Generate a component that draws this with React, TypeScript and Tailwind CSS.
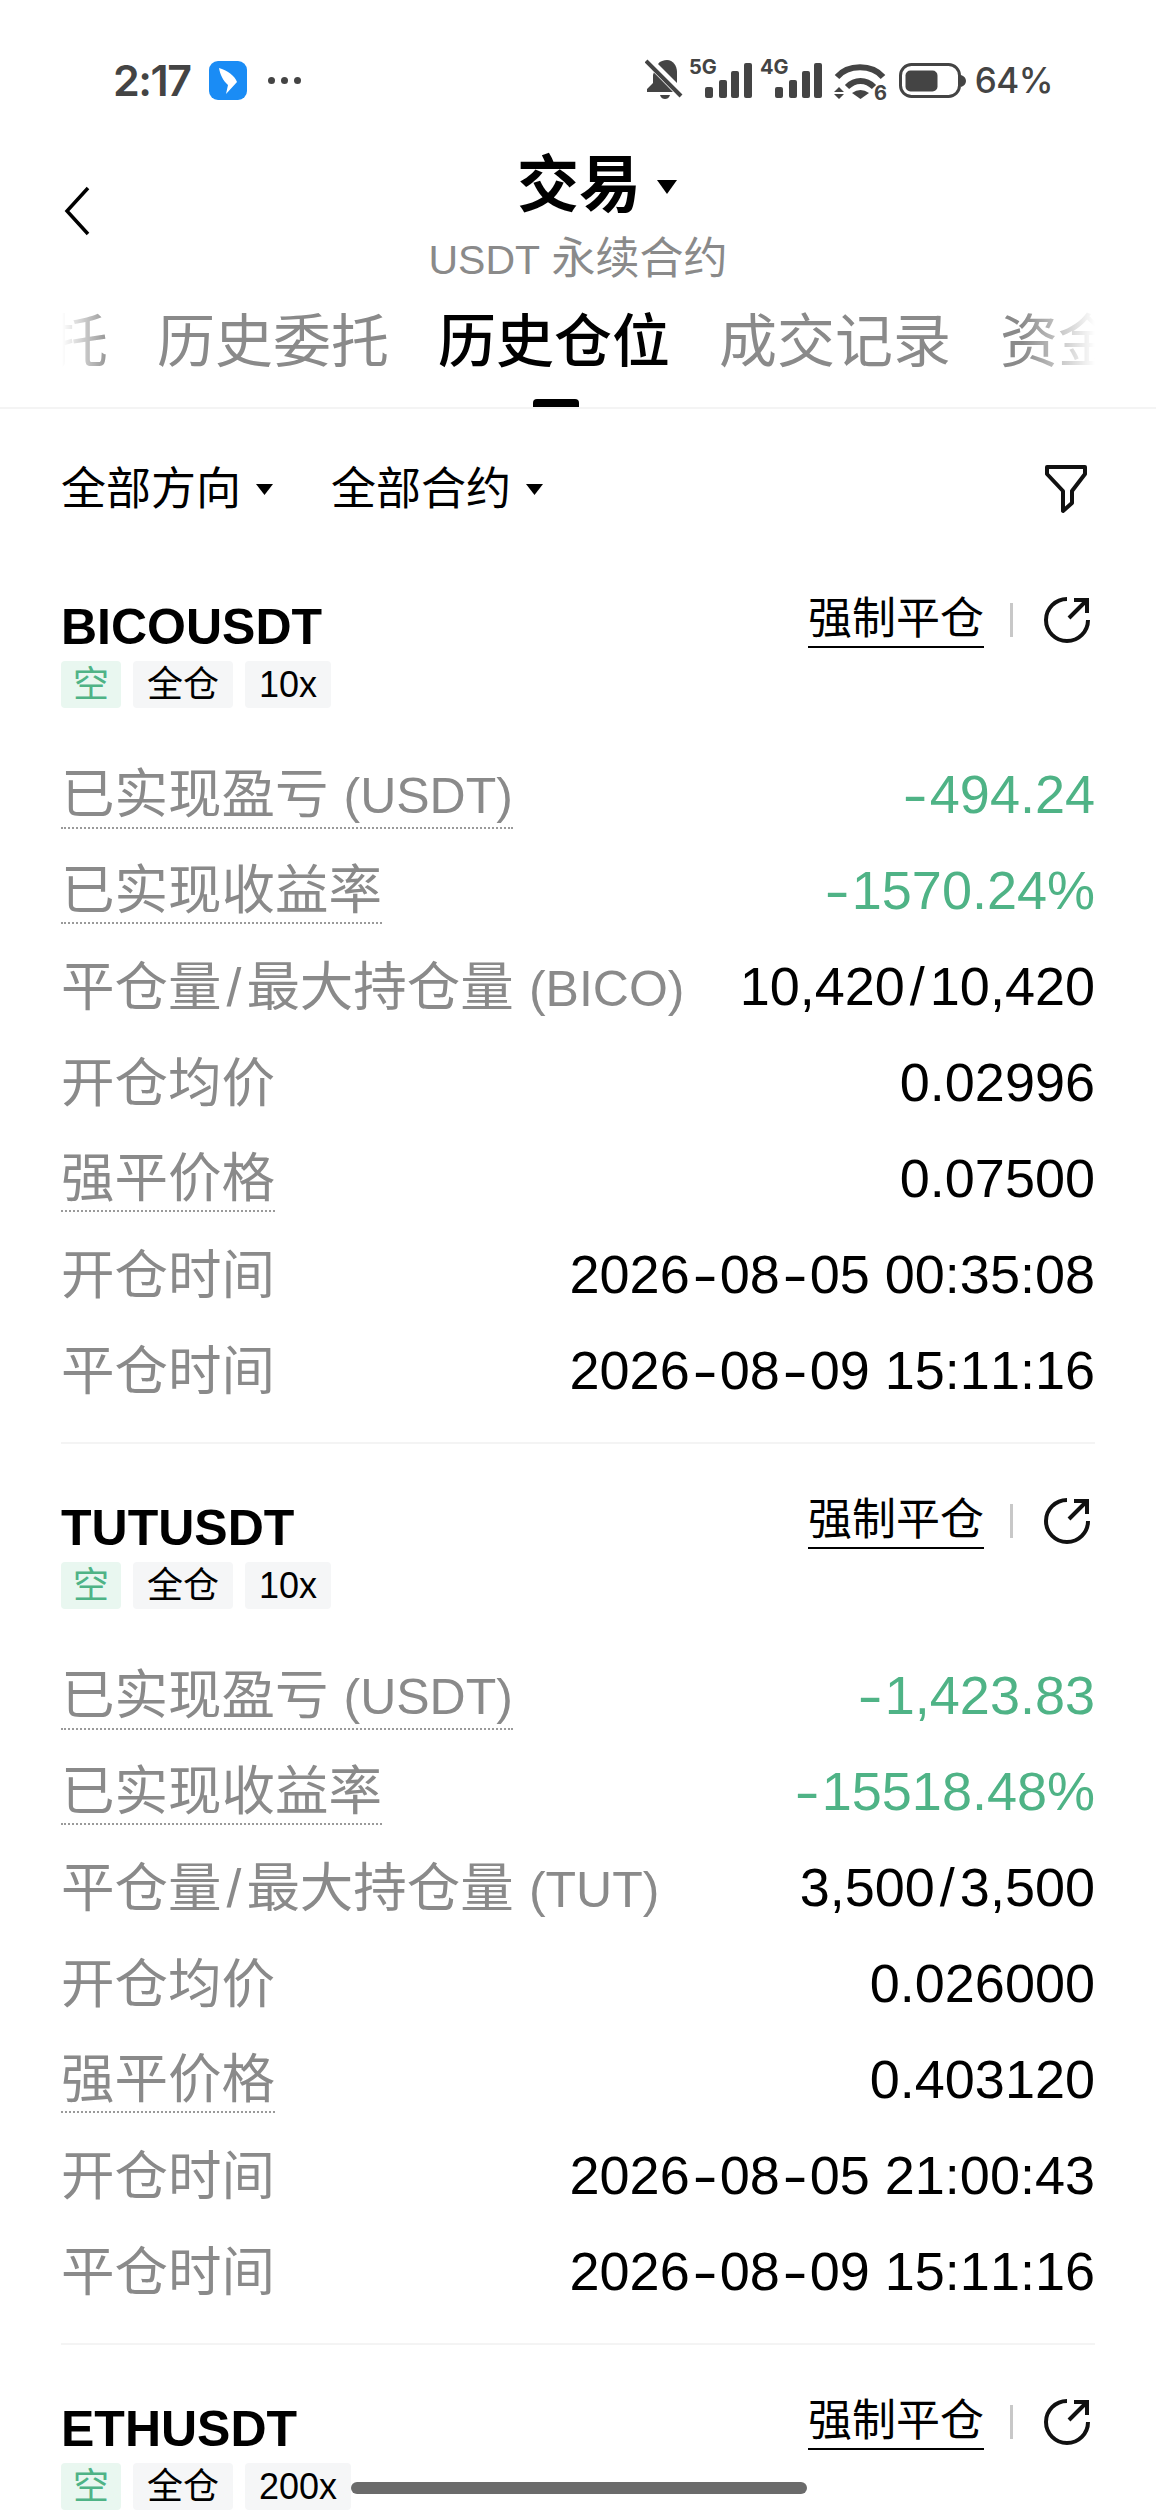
import React from 'react';

interface Position {
  symbol: string;
  leverage: string;
  base: string;
  pnl: string;
  pnlRate: string;
  volume: string;
  openPrice: string;
  liqPrice: string;
  openTime: string;
  closeTime: string;
}

const positions: Position[] = [
  {
    symbol: 'BICOUSDT',
    leverage: '10x',
    base: 'BICO',
    pnl: '-494.24',
    pnlRate: '-1570.24%',
    volume: '10,420/10,420',
    openPrice: '0.02996',
    liqPrice: '0.07500',
    openTime: '2026-08-05 00:35:08',
    closeTime: '2026-08-09 15:11:16',
  },
  {
    symbol: 'TUTUSDT',
    leverage: '10x',
    base: 'TUT',
    pnl: '-1,423.83',
    pnlRate: '-15518.48%',
    volume: '3,500/3,500',
    openPrice: '0.026000',
    liqPrice: '0.403120',
    openTime: '2026-08-05 21:00:43',
    closeTime: '2026-08-09 15:11:16',
  },
];

const Caret = ({ className }: { className: string }) => (
  <svg viewBox="0 0 10 10" preserveAspectRatio="none" className={className} fill="currentColor">
    <path d="M0 0h10L5 10z" />
  </svg>
);

const Bars = ({ label, xs }: { label: string; xs: number[] }) => (
  <svg viewBox="0 -6 65 50" className="-mt-[6px] h-[50px] w-[65px]" fill="#444444">
    <text x="1" y="16" fontSize="20" fontWeight="700" fontFamily="Inter">
      {label}
    </text>
    <rect x={xs[0]} y="29" width="8" height="11" rx="2" />
    <rect x={xs[1]} y="22" width="8" height="18" rx="2" />
    <rect x={xs[2]} y="13" width="8" height="27" rx="2" />
    <rect x={xs[3]} y="5" width="8" height="35" rx="2" />
  </svg>
);

const StatusBar = () => (
  <div className="flex h-[160px] items-center justify-between pl-[113px] pr-[103px] text-[#444444] [font-family:Inter,sans-serif]">
    <div className="flex items-center">
      <span className="w-[96px] text-[43px] font-semibold leading-none tracking-[-1.5px]">2:17</span>
      <svg viewBox="0 0 38 39" className="h-[39px] w-[38px]">
        <rect width="38" height="39" rx="9" fill="#1a8cf5" />
        <path d="M10 7C18 9 26 15 28 21L17 33L19 24C14 20 11 13 10 7z" fill="#ffffff" />
      </svg>
      <div className="ml-[21px] flex gap-[6px]">
        <span className="h-[7px] w-[7px] rounded-full bg-[#444444]" />
        <span className="h-[7px] w-[7px] rounded-full bg-[#444444]" />
        <span className="h-[7px] w-[7px] rounded-full bg-[#444444]" />
      </div>
    </div>
    <div className="flex items-center">
      <svg viewBox="0 0 38 44" className="h-[44px] w-[38px]" fill="#444444">
        <path d="M13 6C15 3 19 2 22 2C28 2 32 8 32 14V25z" />
        <path d="M9 14L28 34H2V31L8 25V17z" />
        <path d="M15 37h10c-1 3-3 4-5 4s-4-1-5-4z" />
        <path d="M2 2l35 35" stroke="#ffffff" strokeWidth="8" />
        <path d="M1 3l35 35" stroke="#444444" strokeWidth="4" />
      </svg>
      <div className="ml-[5px]">
        <Bars label="5G" xs={[17, 31, 43, 56]} />
      </div>
      <div className="ml-[6px]">
        <Bars label="4G" xs={[16, 30, 43, 55]} />
      </div>
      <svg viewBox="0 0 54 50" className="-mb-[6px] ml-[9px] h-[50px] w-[54px]" fill="#444444">
        <path d="M4 19C15 6 39 6 50 19" fill="none" stroke="#444444" strokeWidth="6" />
        <path d="M14 29C22 21 33 21 41 29" fill="none" stroke="#444444" strokeWidth="6" />
        <path d="M19 35Q27.500 29 36 35L27.500 41z" />
        <path d="M6 29l5 5H1zM1 36h10l-5 5z" />
        <text x="41" y="42" fontSize="20" fontWeight="700" fontFamily="Inter">
          6
        </text>
      </svg>
      <svg viewBox="0 0 68 44" className="ml-[12px] h-[44px] w-[68px]" fill="#444444">
        <rect x="1.500" y="6.500" width="59" height="32" rx="11" fill="none" stroke="#444444" strokeWidth="3" />
        <rect x="6.500" y="12.500" width="32" height="21" rx="5" />
        <path d="M62 17c3 1 5 3 5 6s-2 5-5 6z" />
      </svg>
      <span className="ml-[8px] text-[35px] font-medium leading-none tracking-[-0.5px]">64%</span>
    </div>
  </div>
);

const Header = () => (
  <div className="relative flex flex-col items-center">
    <svg viewBox="0 0 26 50" className="absolute left-[64px] top-[26px] h-[50px] w-[26px]" fill="none" stroke="#000000" strokeWidth="3.500">
      <path d="M24 2L3 25l21 23" />
    </svg>
    <div className="flex h-[52px] items-start">
      <span className="ml-[38px] text-[62px] font-bold leading-[52px] text-black">交易</span>
      <Caret className="ml-[16px] mt-[20px] h-[14px] w-[20px] text-black" />
    </div>
    <div className="mt-[22px] text-[44px] leading-[50px] text-[#8a8a8a]">
      <span className="text-[41px]">USDT </span>永续合约
    </div>
  </div>
);

const Tabs = () => (
  <div className="mt-[22px] h-[102px] border-b-2 border-[#f4f4f4]">
    <div className="ml-[62px] w-[1033px] overflow-hidden [mask-image:linear-gradient(to_right,transparent,black_50px,black_960px,transparent)]">
      <div className="-ml-[186px] flex w-[1400px] gap-[49px] text-[58px] leading-[70px] text-[#8a8a8a]">
        <span>计划委托</span>
        <span>历史委托</span>
        <span className="font-medium text-black">历史仓位</span>
        <span>成交记录</span>
        <span>资金流水</span>
      </div>
    </div>
    <div className="ml-[533px] mt-[22px] h-[8px] w-[46px] rounded-t-[4px] bg-black" />
  </div>
);

const Filters = () => (
  <div className="mt-[48px] flex h-[64px] items-center justify-between pl-[61px] pr-[68px] text-black">
    <div className="flex items-center">
      <span className="text-[45px] leading-none">全部方向</span>
      <Caret className="ml-[15px] h-[11px] w-[17px]" />
      <span className="ml-[58px] text-[45px] leading-none">全部合约</span>
      <Caret className="ml-[15px] h-[11px] w-[17px]" />
    </div>
    <svg viewBox="0 0 44 50" className="h-[50px] w-[44px]" fill="none" stroke="#111111" strokeWidth="4">
      <path d="M3 3h38v7L28 27v12l-9 8V27L3 10z" strokeLinejoin="round" />
    </svg>
  </div>
);

const Chip = ({ text, green }: { text: string; green?: boolean }) => (
  <span
    className={
      green
        ? 'flex h-[47px] w-[60px] items-center justify-center rounded-[4px] bg-[#e9f7f0] text-[36px] text-[#4fb386]'
        : 'flex h-[47px] items-center justify-center rounded-[4px] bg-[#f5f6f7] px-[14px] text-[36px] text-black'
    }
  >
    {text}
  </span>
);

// hyphens and slashes sit wider in the picture than the font draws them
const Value = ({ text }: { text: string }) => {
  const parts = text.split(/([-/])/);
  return (
    <>
      {parts.map((part, i) => {
        if (part === '-') {
          return (
            <span key={i} className="inline-block scale-x-[1.4] px-[6px]">
              -
            </span>
          );
        }
        if (part === '/') {
          return (
            <span key={i} className="px-[5px]">
              /
            </span>
          );
        }
        return <React.Fragment key={i}>{part}</React.Fragment>;
      })}
    </>
  );
};

const Row = ({
  label,
  unit,
  value,
  dotted,
  green,
}: {
  label: string;
  unit?: string;
  value: string;
  dotted?: boolean;
  green?: boolean;
}) => (
  <div className="flex h-[96px] items-center justify-between">
    <span
      className={
        dotted
          ? 'border-b-2 border-dotted border-[#9a9a9a] text-[53.5px] leading-[62px] text-[#8a8a8a]'
          : 'text-[53.5px] leading-[64px] text-[#8a8a8a]'
      }
    >
      <Value text={label} />
      {unit && <span className="ml-[15px] text-[50px]">({unit})</span>}
    </span>
    <span className={green ? '-mt-[4px] text-[54px] text-[#4fb386]' : '-mt-[4px] text-[54px] text-black'}>
      <Value text={value} />
    </span>
  </div>
);

const Card = ({ item, last }: { item: Position; last?: boolean }) => (
  <div className={last ? 'mx-[61px] pt-[56px]' : 'mx-[61px] h-[901px] border-b-2 border-[#f4f4f4] pt-[56px]'}>
    <div className="flex items-start justify-between">
      <div className="flex flex-col">
        <span className="text-[50px] font-bold leading-[56px] text-black">{item.symbol}</span>
        <div className="mt-[6px] flex gap-[12px]">
          <Chip text="空" green />
          <Chip text="全仓" />
          <Chip text={item.leverage} />
        </div>
      </div>
      <div className="-mt-[8px] flex items-center pr-[4px]">
        <span className="border-b-2 border-black text-[44px] leading-[55px] text-black">强制平仓</span>
        <span className="ml-[26px] h-[34px] w-[3px] bg-[#c8c8c8]" />
        <svg viewBox="0 0 48 48" className="ml-[30px] h-[48px] w-[48px]" fill="none" stroke="#111111" strokeWidth="4">
          <path d="M24 3A21 21 0 1 0 45 24" />
          <path d="M26 22L44 4M31 4h13v13" />
        </svg>
      </div>
    </div>
    {!last && (
      <div className="mt-[40px]">
        <Row label="已实现盈亏" unit="USDT" value={item.pnl} dotted green />
        <Row label="已实现收益率" value={item.pnlRate} dotted green />
        <Row label="平仓量/最大持仓量" unit={item.base} value={item.volume} />
        <Row label="开仓均价" value={item.openPrice} />
        <Row label="强平价格" value={item.liqPrice} dotted />
        <Row label="开仓时间" value={item.openTime} />
        <Row label="平仓时间" value={item.closeTime} />
      </div>
    )}
  </div>
);

const App = () => (
  <div className="relative h-[2510px] w-[1156px] overflow-hidden bg-white [font-kerning:none] [font-family:'Liberation_Sans','Noto_Sans_CJK_SC',sans-serif]">
    <StatusBar />
    <Header />
    <Tabs />
    <Filters />
    <div className="mt-[22px]">
      {positions.map((p) => (
        <Card key={p.symbol} item={p} />
      ))}
      <Card
        last
        item={{
          symbol: 'ETHUSDT',
          leverage: '200x',
          base: 'ETH',
          pnl: '',
          pnlRate: '',
          volume: '',
          openPrice: '',
          liqPrice: '',
          openTime: '',
          closeTime: '',
        }}
      />
    </div>
    <div className="absolute left-[351px] top-[2482px] h-[12px] w-[456px] rounded-full bg-[#6b6b6b]" />
  </div>
);

export default App;
